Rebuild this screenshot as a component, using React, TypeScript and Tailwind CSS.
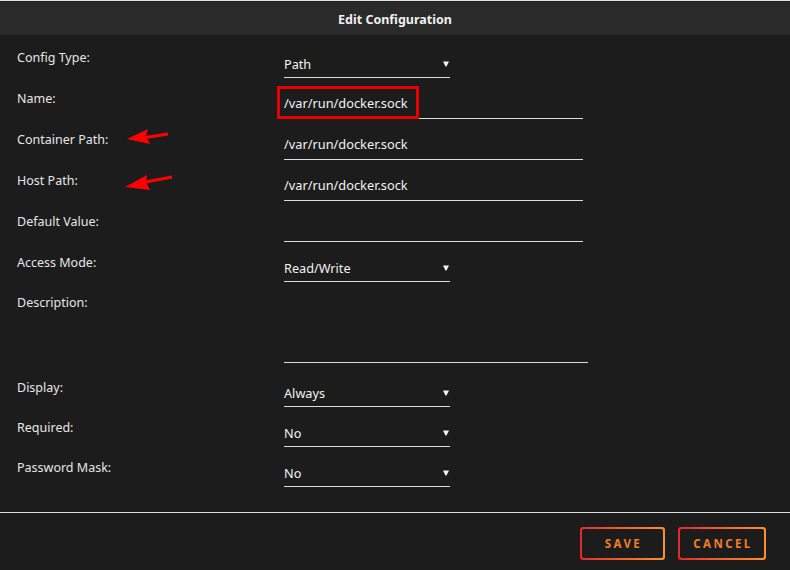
import React from "react";

const Caret = () => (
  <svg width="6" height="6" viewBox="0 0 6 6" className="absolute right-[1px] bottom-[10px]">
    <polygon points="0,0.5 6,0.5 3.5,5.5 2.5,5.5" fill="#f2f2f2" />
  </svg>
);

type RowProps = {
  label: string;
  h: string;
  children?: React.ReactNode;
  extra?: string;
};

const Row = ({ label, h, children, extra = "" }: RowProps) => (
  <div className={`flex ${h} ${extra}`}>
    <div className="w-[284px] pl-[17px] pt-[13px] text-[12.5px] leading-[16px] text-[#e6e6e6]">{label}</div>
    <div className="flex flex-col justify-end">{children}</div>
  </div>
);

const Select = ({ value }: { value: string }) => (
  <div className="relative w-[166px] border-b border-[#dcdcdc] pb-[5px] text-[12.7px] leading-[16px] text-[#f2f2f2]">
    {value}
    <Caret />
  </div>
);

const TextIn = ({ value, w = "w-[299px]" }: { value?: string; w?: string }) => (
  <div className={`${w} h-[24px] border-b border-[#dcdcdc] pb-[6px] text-[12.8px] leading-[16px] text-[#f2f2f2]`}>
    {value}
  </div>
);

const Btn = ({ label, w }: { label: string; w: string }) => (
  <div className={`${w} h-[33px] rounded-[3px] bg-linear-to-r from-[#e3262a] to-[#fd8d2c] p-[2px]`}>
    <div className="flex h-full w-full items-center justify-center rounded-[2px] bg-[#1c1c1c] pl-[2px] text-[11.5px] font-bold tracking-[2.4px] text-[#f27c27]">
      {label}
    </div>
  </div>
);

export default function App() {
  return (
    <div
      className="relative h-[570px] w-[790px] overflow-hidden bg-[#1c1c1c]"
      style={{ fontFamily: '"Noto Sans", "Open Sans", sans-serif' }}
    >
      <div className="h-[1px] bg-[#e2e2e2]" />
      <div className="h-[1px] bg-[#202020]" />
      <div className="flex h-[33px] items-center justify-center bg-[#2a2a2a] pt-[4px] text-[12.5px] font-bold text-[#f0f0f0]">
        Edit Configuration
      </div>

      <div className="pt-[2px]">
        <Row label="Config Type:" h="h-[41px]">
          <Select value="Path" />
        </Row>
        <Row label="Name:" h="h-[41px]">
          <TextIn value="/var/run/docker.sock" />
        </Row>
        <Row label="Container Path:" h="h-[41px]">
          <TextIn value="/var/run/docker.sock" />
        </Row>
        <Row label="Host Path:" h="h-[41px]">
          <TextIn value="/var/run/docker.sock" />
        </Row>
        <Row label="Default Value:" h="h-[41px]">
          <TextIn />
        </Row>
        <Row label="Access Mode:" h="h-[40px]">
          <Select value="Read/Write" />
        </Row>
        <Row label="Description:" h="h-[81px]">
          <TextIn w="w-[304px]" />
        </Row>
        <Row label="Display:" h="h-[40px]" extra="mt-[4px]">
          <Select value="Always" />
        </Row>
        <Row label="Required:" h="h-[40px]">
          <Select value="No" />
        </Row>
        <Row label="Password Mask:" h="h-[40px]">
          <Select value="No" />
        </Row>
      </div>

      <div className="mt-[25px] h-[1px] bg-[#e0e0e0]" />
      <div className="flex justify-end gap-[13px] pr-[24px] pt-[14px]">
        <Btn label="SAVE" w="w-[85px]" />
        <Btn label="CANCEL" w="w-[88px]" />
      </div>

      {/* annotation: red box */}
      <div className="absolute left-[277px] top-[86px] h-[33px] w-[142px] border-[3px] border-[#e60000]" />

      {/* annotation: red arrows */}
      <svg className="absolute left-0 top-0" width="790" height="570" viewBox="0 0 790 570">
        <polygon points="127,139 148,129 146,136 150,144" fill="#ff0000" />
        <line x1="146" y1="137.5" x2="168" y2="134" stroke="#ff0000" strokeWidth="3" />
        <polygon points="125,187 147,175 146,182 150,190" fill="#ff0000" />
        <line x1="146" y1="182" x2="172" y2="177" stroke="#ff0000" strokeWidth="3" />
      </svg>
    </div>
  );
}
